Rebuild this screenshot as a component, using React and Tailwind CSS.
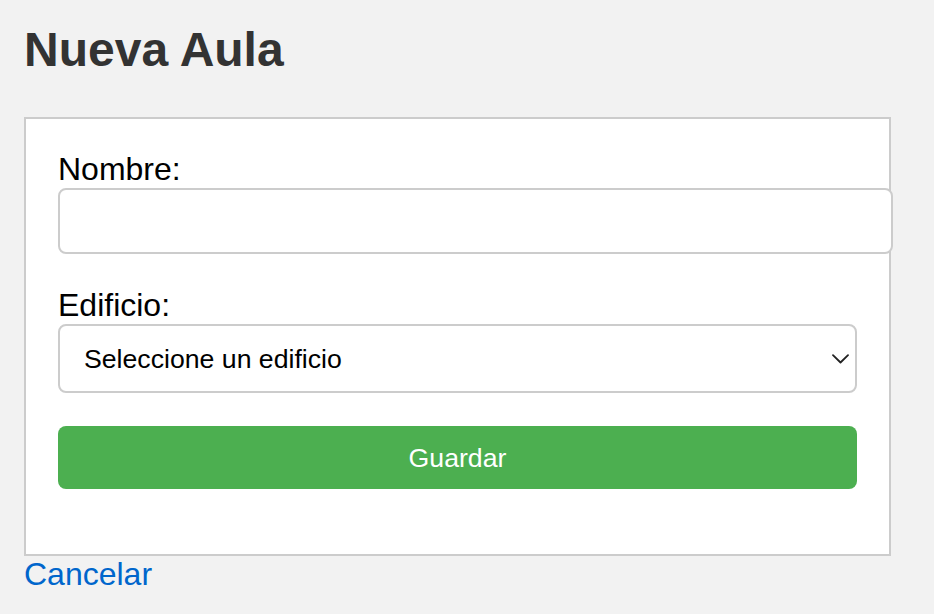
import React, { useState } from "react";

const NuevaAula = () => {
  const [nombre, setNombre] = useState("");
  const [edificio, setEdificio] = useState("");

  return (
    <div className="bg-[#f2f2f2] min-h-screen px-6 pt-[22px] font-['Liberation_Sans',Arial,sans-serif]">
      <h1 className="text-[48px] leading-[55px] font-bold text-[#333]">
        Nueva Aula
      </h1>

      <form
        className="mt-[40px] w-[867px] bg-white border-2 border-[#ccc] p-8"
        onSubmit={(e) => e.preventDefault()}
      >
        <label className="block text-[32px] leading-[37px] text-black">
          Nombre:
        </label>
        <input
          type="text"
          value={nombre}
          onChange={(e) => setNombre(e.target.value)}
          className="relative block box-content w-full h-[62px] px-4 mb-[33px] bg-white border-2 border-[#ccc] rounded-lg text-[26.67px] outline-none"
        />

        <label className="block text-[32px] leading-[37px] text-black">
          Edificio:
        </label>
        <div className="relative mb-[33px]">
          <select
            value={edificio}
            onChange={(e) => setEdificio(e.target.value)}
            className="block w-full h-[69px] pl-6 pr-12 appearance-none bg-white border-2 border-[#ccc] rounded-lg text-[26.67px] text-black outline-none"
          >
            <option value="">Seleccione un edificio</option>
          </select>
          {/* chevron */}
          <svg
            className="absolute right-[8px] top-1/2 -translate-y-1/2 pointer-events-none"
            width="17"
            height="10"
            viewBox="0 0 17 10"
            fill="none"
          >
            <path
              d="M1 1.2 L8.5 8.5 L16 1.2"
              stroke="#222"
              strokeWidth="1.8"
              strokeLinecap="round"
              strokeLinejoin="round"
            />
          </svg>
        </div>

        <button
          type="submit"
          className="block w-full h-[63px] mb-[33px] bg-[#4caf50] text-white text-[26.67px] rounded-lg"
        >
          Guardar
        </button>
      </form>

      <a href="#" className="text-[32px] leading-[37px] text-[#0066cc]">
        Cancelar
      </a>
    </div>
  );
};

export default function App() {
  return <NuevaAula />;
}
